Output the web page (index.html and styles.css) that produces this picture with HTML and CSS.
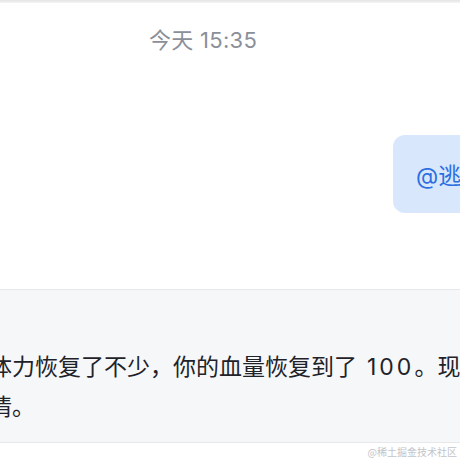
FILE: index.html
```html
<!DOCTYPE html>
<html lang="zh-CN">
<head>
<meta charset="utf-8">
<link rel="stylesheet" href="styles.css">
</head>
<body>
<div class="page">
  <div class="topbar"></div>
  <div class="time-row"><span class="time">今天 15:35</span></div>
  <div class="msg-row">
    <div class="bubble">@逃跑的勇者 继续前进</div>
  </div>
  <div class="panel">
    <div class="line">体力恢复了不少，你的血量恢复到了<span class="num">100</span>。现在你可以继续前进了</div>
    <div class="line">情。</div>
  </div>
  <div class="footer"><span class="mark">@稀土掘金技术社区</span></div>
</div>
</body>
</html>
```

FILE: styles.css
```css
html, body {
  margin: 0;
  padding: 0;
  background: #ffffff;
}
.page {
  width: 460px;
  height: 460px;
  overflow: hidden;
  font-family: Inter, "Noto Sans CJK SC", sans-serif;
}
.topbar {
  height: 3px;
  background: linear-gradient(#e4e4e4, #f4f4f4);
}
.time-row {
  display: flex;
  justify-content: center;
  padding-right: 54px;
  margin-top: 22px;
}
.time {
  font-size: 22px;
  line-height: 30px;
  color: #8a8f99;
  letter-spacing: 0.3px;
}
.msg-row {
  margin-top: 80px;
  padding-left: 393px;
  overflow: hidden;
}
.bubble {
  display: flex;
  align-items: center;
  height: 78px;
  padding: 0 23px;
  width: max-content;
  white-space: nowrap;
  border-radius: 12px;
  background: #d9e7fd;
  color: #2d6fe0;
  font-size: 23px;
}
.panel {
  margin-top: 76px;
  border-top: 1px solid #e6e8eb;
  border-bottom: 1px solid #e6e8eb;
  background: #f6f7f9;
  padding: 57px 0 15px 0;
  overflow: hidden;
}
.line {
  margin-left: -11px;
  white-space: nowrap;
  font-size: 23px;
  line-height: 40px;
  color: #1f2329;
}
.num {
  margin-left: 10px;
  letter-spacing: 3px;
}
.footer {
  display: flex;
  justify-content: flex-end;
  padding-right: 3px;
  margin-top: 2px;
}
.mark {
  font-size: 10px;
  line-height: 14px;
  color: #c2c4c8;
  font-family: "Noto Sans CJK SC", sans-serif;
}
```
